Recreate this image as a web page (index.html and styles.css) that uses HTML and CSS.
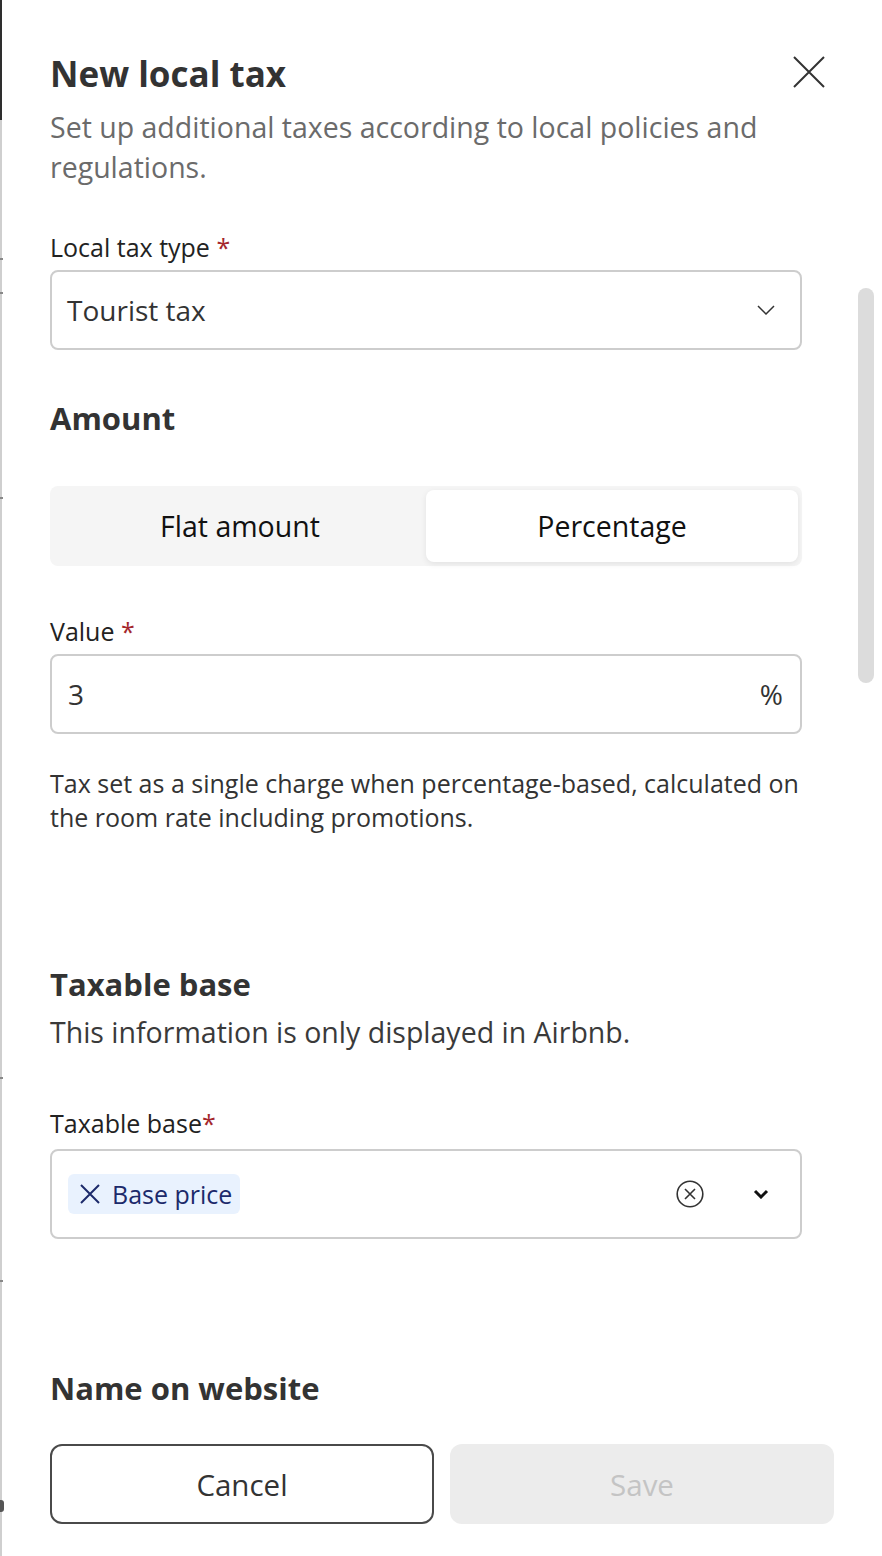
FILE: index.html
```html
<!DOCTYPE html>
<html lang="en">
<head>
  <meta charset="UTF-8" />
  <meta name="viewport" content="width=device-width, initial-scale=1.0">
  <title>New local tax</title>
  <link rel="stylesheet" href="styles.css">
</head>
<body>
<div class="page">

  <!-- edge of the page behind the drawer -->
  <div class="edge">
    <div class="edge-top"></div>
    <div class="tick t1"></div>
    <div class="tick t2"></div>
    <div class="tick t3"></div>
    <div class="tick t4"></div>
    <div class="tick t5"></div>
    <div class="edge-blob"></div>
  </div>

  <div class="panel">
    <header class="panel-head">
      <div>
        <h1>New local tax</h1>
        <p class="subtitle">Set up additional taxes according to local policies and regulations.</p>
      </div>
      <button class="close" aria-label="Close">
        <svg width="32" height="32" viewBox="0 0 32 32"><path d="M1 1 L31 31 M31 1 L1 31" stroke="#333" stroke-width="2" fill="none"/></svg>
      </button>
    </header>

    <label class="field-label first">Local tax type <span class="req">*</span></label>
    <div class="select">
      <span>Tourist tax</span>
      <svg width="18" height="10" viewBox="0 0 18 10"><path d="M1 1 L9 9 L17 1" stroke="#333" stroke-width="1.5" fill="none"/></svg>
    </div>

    <h2 class="section">Amount</h2>
    <div class="segmented">
      <div class="seg">Flat amount</div>
      <div class="seg active">Percentage</div>
    </div>

    <label class="field-label">Value <span class="req">*</span></label>
    <div class="input">
      <span>3</span>
      <span>%</span>
    </div>
    <p class="helper">Tax set as a single charge when percentage-based, calculated on the room rate including promotions.</p>

    <h2 class="section taxable">Taxable base</h2>
    <p class="desc">This information is only displayed in Airbnb.</p>

    <label class="field-label base-label">Taxable base<span class="req">*</span></label>
    <div class="multi">
      <span class="chip">
        <svg width="20" height="20" viewBox="0 0 20 20"><path d="M1 1 L19 19 M19 1 L1 19" stroke="#1c2a6b" stroke-width="2" fill="none"/></svg>
        Base price
      </span>
      <div class="multi-icons">
        <svg width="28" height="28" viewBox="0 0 28 28"><circle cx="14" cy="14" r="12.8" stroke="#333" stroke-width="1.6" fill="none"/><path d="M9 9 L19 19 M19 9 L9 19" stroke="#333" stroke-width="1.6" fill="none"/></svg>
        <svg width="16" height="10" viewBox="0 0 16 10"><path d="M2 2 L8 8 L14 2" stroke="#111" stroke-width="3" fill="none"/></svg>
      </div>
    </div>

    <h2 class="section name">Name on website</h2>

    <div class="actions">
      <button class="btn cancel">Cancel</button>
      <button class="btn save" disabled>Save</button>
    </div>
  </div>

  <div class="scrollbar"></div>
</div>
</body>
</html>
```

FILE: styles.css
```css
body { margin:0; background:#fff; font-family:"Open Sans", "Noto Sans", sans-serif; color:#333; }
.page { display:flex; min-height:1556px; position:relative; overflow:hidden; }

.edge { width:2px; flex:none; background:#cfcfcf; display:flex; flex-direction:column; }
.edge-top { height:120px; background:#2e2e2e; }
.tick { width:3px; height:2px; background:#888; }
.t1 { margin-top:138px; }
.t2 { margin-top:32px; }
.t3 { margin-top:203px; }
.t4 { margin-top:578px; }
.t5 { margin-top:201px; }
.edge-blob { width:4px; height:12px; margin-top:218px; background:#555; border-radius:0 3px 3px 0; }

.panel { flex:1; padding:50px 80px 0 48px; }

.panel-head { display:flex; justify-content:space-between; align-items:flex-start; margin-right:-23px; }
h1 { margin:0; font-size:35px; line-height:48px; font-weight:700; color:#333; }
.subtitle { margin:9px 0 0; font-size:28.5px; line-height:40px; color:#6b6b6b; }
.close { border:none; background:none; padding:0; margin-top:6px; width:32px; height:32px; cursor:pointer; }
.close svg { display:block; }

.field-label { display:block; margin-top:48px; font-size:25px; line-height:34px; color:#222; }
.field-label.first { margin-top:43px; }
.field-label.base-label { margin-top:54px; }
.req { color:#a4262c; }

.select, .input { margin-top:6px; height:80px; box-sizing:border-box; border:2px solid #cdcdcd; border-radius:8px; display:flex; align-items:center; justify-content:space-between; font-size:28px; color:#333; }
.select { padding:0 25px 0 15px; }
.input { padding:0 17px 0 16px; }

.section { margin:48px 0 0; font-size:31px; line-height:40px; font-weight:700; color:#333; }
.section.taxable { margin-top:130px; }
.section.name { margin-top:129px; }

.segmented { margin-top:48px; height:80px; box-sizing:border-box; padding:4px; background:#f5f5f5; border-radius:8px; display:grid; grid-template-columns:1fr 1fr; }
.seg { display:flex; align-items:center; justify-content:center; font-size:28.5px; color:#111; border-radius:8px; }
.seg.active { background:#fff; box-shadow:0 2px 6px rgba(0,0,0,0.08); }

.helper { margin:32px 0 0; font-size:25px; line-height:34px; color:#333; }
.desc { margin:8px 0 0; font-size:28.5px; line-height:40px; color:#3a3a3a; }

.multi { margin-top:9px; height:90px; box-sizing:border-box; border:2px solid #cdcdcd; border-radius:8px; padding:0 31px 0 16px; display:flex; align-items:center; justify-content:space-between; }
.chip { display:flex; align-items:center; gap:12px; height:40px; padding:0 8px 0 12px; background:#e9f2fe; border-radius:6px; font-size:25px; color:#1c2a6b; }
.chip svg { display:block; }
.multi-icons { display:flex; align-items:center; gap:49px; }
.multi-icons svg { display:block; }

.actions { margin:36px -32px 0 0; display:grid; grid-template-columns:1fr 1fr; gap:16px; }
.btn { height:80px; border-radius:12px; font-family:inherit; font-size:29.5px; }
.cancel { background:#fff; border:2px solid #4a4a4a; color:#333; }
.save { background:#ececec; border:none; color:#c4c4c4; }

.scrollbar { position:absolute; left:858px; top:288px; width:16px; height:395px; border-radius:8px; background:#dcdcdc; }
```
